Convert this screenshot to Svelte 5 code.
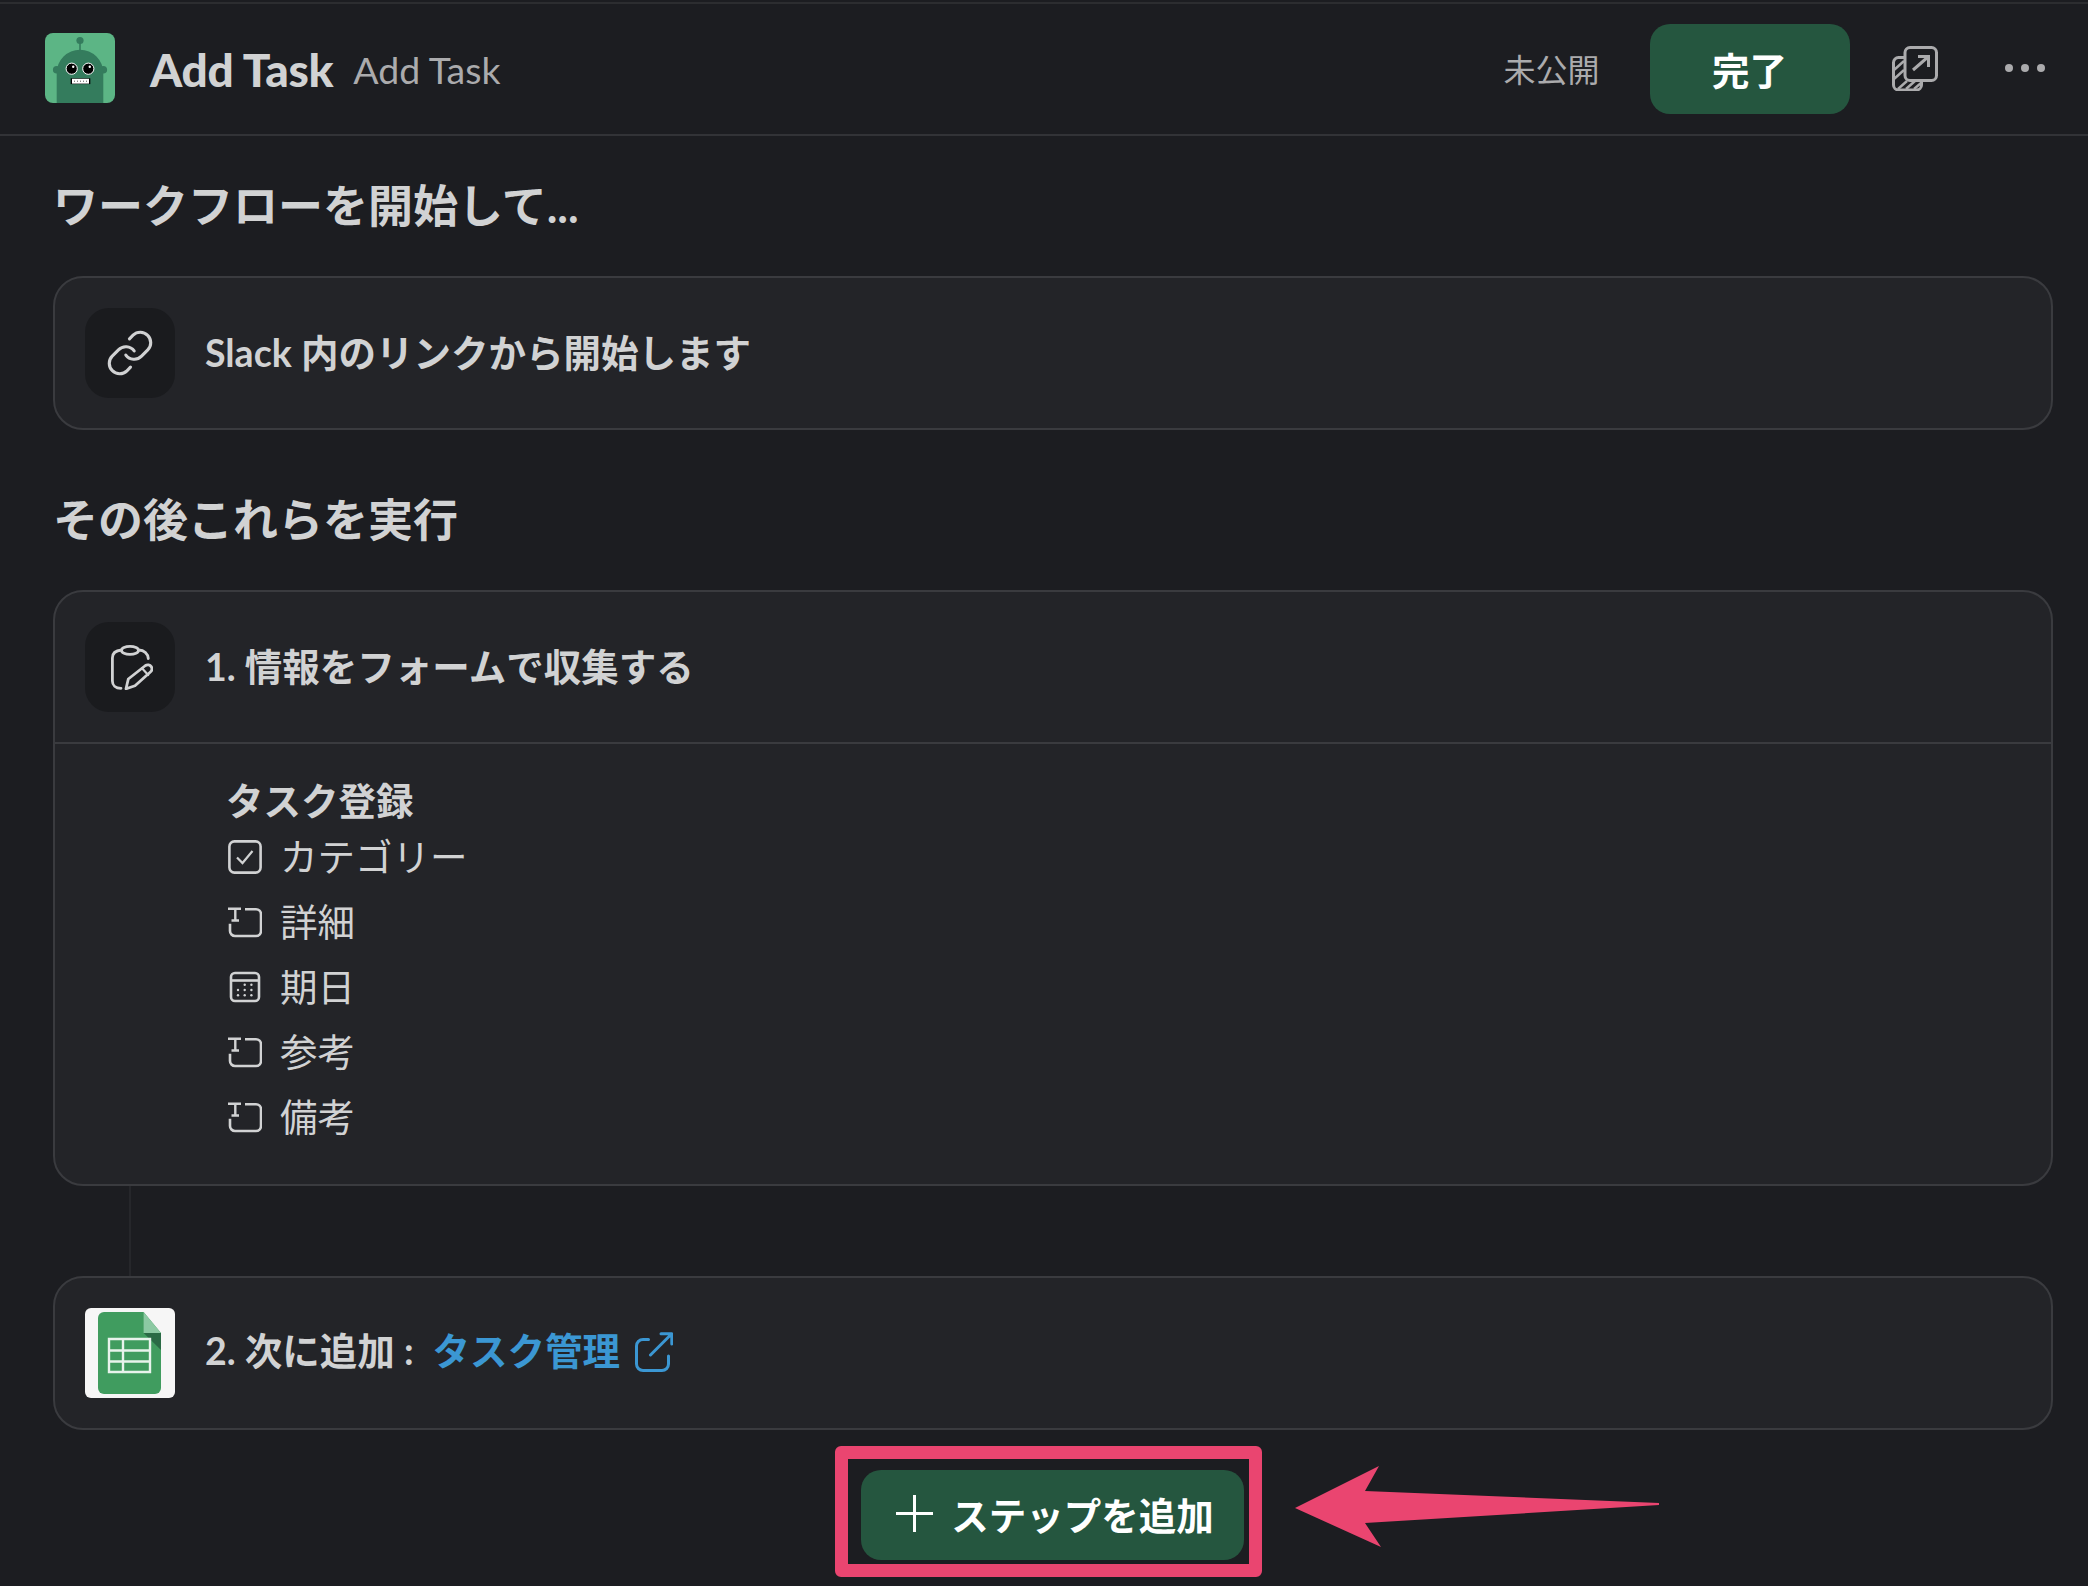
<script>
  const fields = [
    { kind: 'check', label: 'カテゴリー' },
    { kind: 'text', label: '詳細' },
    { kind: 'date', label: '期日' },
    { kind: 'text', label: '参考' },
    { kind: 'text', label: '備考' }
  ];
  const dots = [[15, 12.7], [21.7, 12.7], [8.3, 18], [15, 18], [21.7, 18], [8.3, 23.3], [15, 23.3], [21.7, 23.3]];
</script>

<div class="page">
  <header class="top">
    <svg class="logo" viewBox="0 0 70 70" aria-hidden="true">
      <rect width="70" height="70" rx="8" fill="#5cb585" />
      <circle cx="35" cy="7.5" r="3.6" fill="#347c5d" />
      <rect x="34.2" y="8" width="1.6" height="10" fill="#347c5d" />
      <circle cx="11.7" cy="36.7" r="3.8" fill="#347c5d" />
      <circle cx="58.3" cy="36.7" r="3.8" fill="#347c5d" />
      <path d="M11.7 70V40A23.3 23.3 0 0 1 58.3 40V70Z" fill="#347c5d" />
      <circle cx="26.7" cy="35.7" r="5.6" fill="#000" stroke="#fff" stroke-width="1" />
      <circle cx="43.3" cy="35.7" r="5.6" fill="#000" stroke="#fff" stroke-width="1" />
      <circle cx="28.2" cy="33.8" r="1.2" fill="#fff" />
      <circle cx="44.8" cy="33.8" r="1.2" fill="#fff" />
      <rect x="25.7" y="45.3" width="19.6" height="5.8" fill="#000" />
      <rect x="27" y="45.8" width="17" height="4.8" fill="#fff" />
      <path d="M29 48.2H42" stroke="#555" stroke-width="1" stroke-dasharray="1 2" />
    </svg>
    <span class="title">Add Task</span>
    <span class="subtitle">Add Task</span>
    <span class="status">未公開</span>
    <button class="done">完了</button>
    <svg class="pop" viewBox="0 0 46 45" fill="none" stroke="#ababad" stroke-width="3" aria-hidden="true">
      <path d="M12 11.5H6.5a5 5 0 0 0-5 5V39a5 5 0 0 0 5 5h18a5 5 0 0 0 5-5v-4.5" />
      <path d="M2 24 12 15M2 33 12 24M6 43 15 35M14 43 23 35M22 43 29 37" stroke-width="2.4" />
      <rect x="13" y="1.5" width="31.5" height="33" rx="5" />
      <path d="M21 24 36 11M26 10.5H36.5V21" />
    </svg>
    <svg class="more" viewBox="0 0 40 10" fill="#ababad" aria-hidden="true">
      <circle cx="4" cy="5" r="4" /><circle cx="20" cy="5" r="4" /><circle cx="36" cy="5" r="4" />
    </svg>
  </header>

  <main class="main">
    <h2 class="first">ワークフローを開始して...</h2>
    <section class="card">
      <div class="row">
        <div class="iconbox">
          <svg class="link" viewBox="0 0 24 24" fill="none" stroke="#d1d2d3" stroke-width="1.5" stroke-linecap="round" stroke-linejoin="round" aria-hidden="true">
            <path d="M10 13a5 5 0 0 0 7.54.54l3-3a5 5 0 0 0-7.07-7.07l-1.72 1.71" />
            <path d="M14 11a5 5 0 0 0-7.54-.54l-3 3a5 5 0 0 0 7.07 7.07l1.71-1.71" />
          </svg>
        </div>
        <span class="label">Slack 内のリンクから開始します</span>
      </div>
    </section>

    <h2 class="second">その後これらを実行</h2>
    <section class="card">
      <div class="row divided">
        <div class="iconbox">
          <svg class="clip" viewBox="0 0 42 45" fill="none" stroke="#d1d2d3" stroke-width="2.8" stroke-linecap="round" stroke-linejoin="round" aria-hidden="true">
            <path d="M10 43.3C4.5 43.3 1.4 40 1.4 36V13C1.4 9 4 5.5 10.5 5" />
            <path d="M27.5 5C33.5 5.2 36.8 9 37.3 13.5" />
            <ellipse cx="19" cy="5.4" rx="8.5" ry="4" />
            <path d="M15 43.8 17.3 34 34.5 20.5C36.4 19.2 39 19.8 40.2 21.6 41.4 23.4 41 25.6 39.4 27L24 40.7Z" />
            <path d="M31 23.2 37.2 30" stroke-width="2.2" />
          </svg>
        </div>
        <span class="label">1. 情報をフォームで収集する</span>
      </div>
      <div class="body">
        <div class="formname">タスク登録</div>
        {#each fields as f}
          <div class="field">
            <svg class="ficon" viewBox="0 0 34 34" fill="none" stroke="#d1d2d3" stroke-width="2.6" aria-hidden="true">
              {#if f.kind === 'check'}
                <rect x="1.4" y="1.4" width="31.2" height="31.2" rx="5" />
                <path d="M9 17.5 14.5 23 24.5 11" stroke-width="2.2" />
              {:else if f.kind === 'text'}
                <path d="M17 4.3H28a5 5 0 0 1 5 5V26a5 5 0 0 1-5 5H7a5 5 0 0 1-5-5V18.7" />
                <path d="M0 3.7H13M7.3 3.7V15.5M3.5 15.5H11" stroke-width="2.4" />
              {:else}
                <rect x="3" y="3" width="28" height="28" rx="4" />
                <path d="M3 10.5H31" />
                {#each dots as d}
                  <circle cx={d[0] + 1.7} cy={d[1] + 2} r="1.2" fill="#d1d2d3" stroke="none" />
                {/each}
              {/if}
            </svg>
            <span>{f.label}</span>
          </div>
        {/each}
      </div>
    </section>

    <div class="connector"></div>

    <section class="card">
      <div class="row target">
        <svg class="sheets" viewBox="0 0 90 90" aria-hidden="true">
          <rect width="90" height="90" rx="6" fill="#f6f6f6" />
          <path d="M19 4H58.6L76 25V80a6 6 0 0 1-6 6H19a6 6 0 0 1-6-6V10a6 6 0 0 1 6-6Z" fill="#409c5f" />
          <path d="M58.6 25 76 42V25Z" fill="#2a6a45" />
          <path d="M58.6 4V25H76Z" fill="#8cc9a3" />
          <path d="M24 31H65V64H24ZM24 42.5H65M24 53.5H65M38 31V64" fill="none" stroke="#e8f3ec" stroke-width="2.4" />
        </svg>
        <span class="label">2. 次に追加 :</span>
        <span class="label anchor">タスク管理</span>
        <svg class="ext" viewBox="0 0 38 40" fill="none" stroke="#3b97d3" stroke-width="3" stroke-linecap="round" stroke-linejoin="round" aria-hidden="true">
          <path d="M13.5 7.5H8a6.5 6.5 0 0 0-6.5 6.5V32A6.5 6.5 0 0 0 8 38.5H27A6.5 6.5 0 0 0 33.5 32V24" />
          <path d="M15.5 23 36.5 2M26 1.8H36.8V12" />
        </svg>
      </div>
    </section>

    <div class="addrow">
      <button class="add">
        <svg class="plus" viewBox="0 0 37 37" stroke="#fff" stroke-width="3" aria-hidden="true"><path d="M18.5 0V37M0 18.5H37" /></svg>
        <span>ステップを追加</span>
      </button>
    </div>
  </main>

  <div class="hilite"></div>
  <svg class="arrow" viewBox="0 0 366 82" aria-hidden="true">
    <path d="M0 42 84 0 70 25 364 37V39L70 57 86 81Z" fill="#ea4570" />
  </svg>
</div>

<style>
  :global(body) {
    margin: 0;
    background: #1c1d21;
  }
  .page {
    position: relative;
    width: 2088px;
    height: 1586px;
    overflow: hidden;
    background: #1c1d21;
    color: #d1d2d3;
    font-family: Lato, "Noto Sans CJK JP", sans-serif;
  }
  .top {
    display: flex;
    align-items: center;
    box-sizing: border-box;
    height: 134px;
    margin-top: 2px;
    padding-left: 45px;
    border-top: 2px solid #2c2d30;
    border-bottom: 2px solid #323337;
  }
  .logo {
    width: 70px;
    height: 70px;
    margin-top: -2px;
  }
  .title {
    margin-left: 35px;
    font-size: 46px;
    font-weight: 900;
    letter-spacing: -0.3px;
  }
  .subtitle {
    margin-left: 20px;
    font-size: 37.5px;
    color: #ababad;
  }
  .status {
    margin-left: 1003px;
    margin-bottom: 2px;
    font-size: 32px;
    color: #ababad;
  }
  .done {
    width: 200px;
    height: 90px;
    margin-left: 50px;
    padding: 0 0 2px;
    border: 0;
    border-radius: 20px;
    background: #25563f;
    color: #fff;
    font: 700 37.5px Lato, "Noto Sans CJK JP", sans-serif;
  }
  .pop {
    width: 46px;
    height: 45px;
    margin-left: 42px;
    margin-top: -2px;
  }
  .more {
    width: 40px;
    height: 10px;
    margin-left: 67px;
    margin-top: -2px;
  }
  .main {
    width: 2000px;
    margin-left: 53px;
  }
  h2 {
    margin: 0;
    height: 70px;
    line-height: 70px;
    font-size: 45px;
    font-weight: 700;
  }
  .first {
    margin-top: 35px;
    margin-bottom: 35px;
  }
  .second {
    margin-top: 55px;
    margin-bottom: 35px;
  }
  .card {
    border: 2px solid #3a3b3f;
    border-radius: 30px;
    background: #232428;
  }
  .row {
    display: flex;
    align-items: center;
    padding: 30px;
  }
  .divided {
    border-bottom: 2px solid #3a3b3f;
  }
  .iconbox {
    display: flex;
    align-items: center;
    justify-content: center;
    width: 90px;
    height: 90px;
    border-radius: 24px;
    background: #1a1b1e;
  }
  .link {
    width: 50px;
    height: 50px;
  }
  .clip {
    width: 42px;
    height: 45px;
    margin-left: 3px;
  }
  .label {
    margin-left: 30px;
    font-size: 37.5px;
    font-weight: 700;
    line-height: 46px;
    white-space: pre;
  }
  .target .label {
    margin-bottom: 4px;
  }
  .target .anchor {
    margin-left: 19px;
    color: #3b97d3;
  }
  .ext {
    width: 38px;
    height: 40px;
    margin-left: 15px;
    margin-bottom: 2px;
  }
  .sheets {
    width: 90px;
    height: 90px;
  }
  .body {
    padding: 36px 0 37px 171px;
  }
  .formname {
    font-size: 37.5px;
    font-weight: 700;
    line-height: 42px;
  }
  .field {
    display: flex;
    align-items: center;
    gap: 18px;
    height: 65px;
    font-size: 37.5px;
  }
  .ficon {
    width: 34px;
    height: 34px;
    margin-left: 2px;
    margin-top: 4px;
  }
  .connector {
    width: 2px;
    height: 90px;
    margin-left: 76px;
    background: #26272b;
  }
  .addrow {
    display: flex;
    padding: 40px 0 0 808px;
  }
  .add {
    display: flex;
    align-items: center;
    justify-content: center;
    gap: 18px;
    width: 383px;
    height: 90px;
    padding: 0 0 4px 5px;
    border: 0;
    border-radius: 20px;
    background: #25563f;
    color: #fff;
    font: 700 37.5px Lato, "Noto Sans CJK JP", sans-serif;
  }
  .plus {
    width: 37px;
    height: 37px;
  }
  .hilite {
    position: absolute;
    left: 835px;
    top: 1446px;
    width: 401px;
    height: 105px;
    border: 13.5px solid #ea4570;
    border-radius: 6px;
  }
  .arrow {
    position: absolute;
    left: 1295px;
    top: 1466px;
    width: 366px;
    height: 82px;
  }
</style>
